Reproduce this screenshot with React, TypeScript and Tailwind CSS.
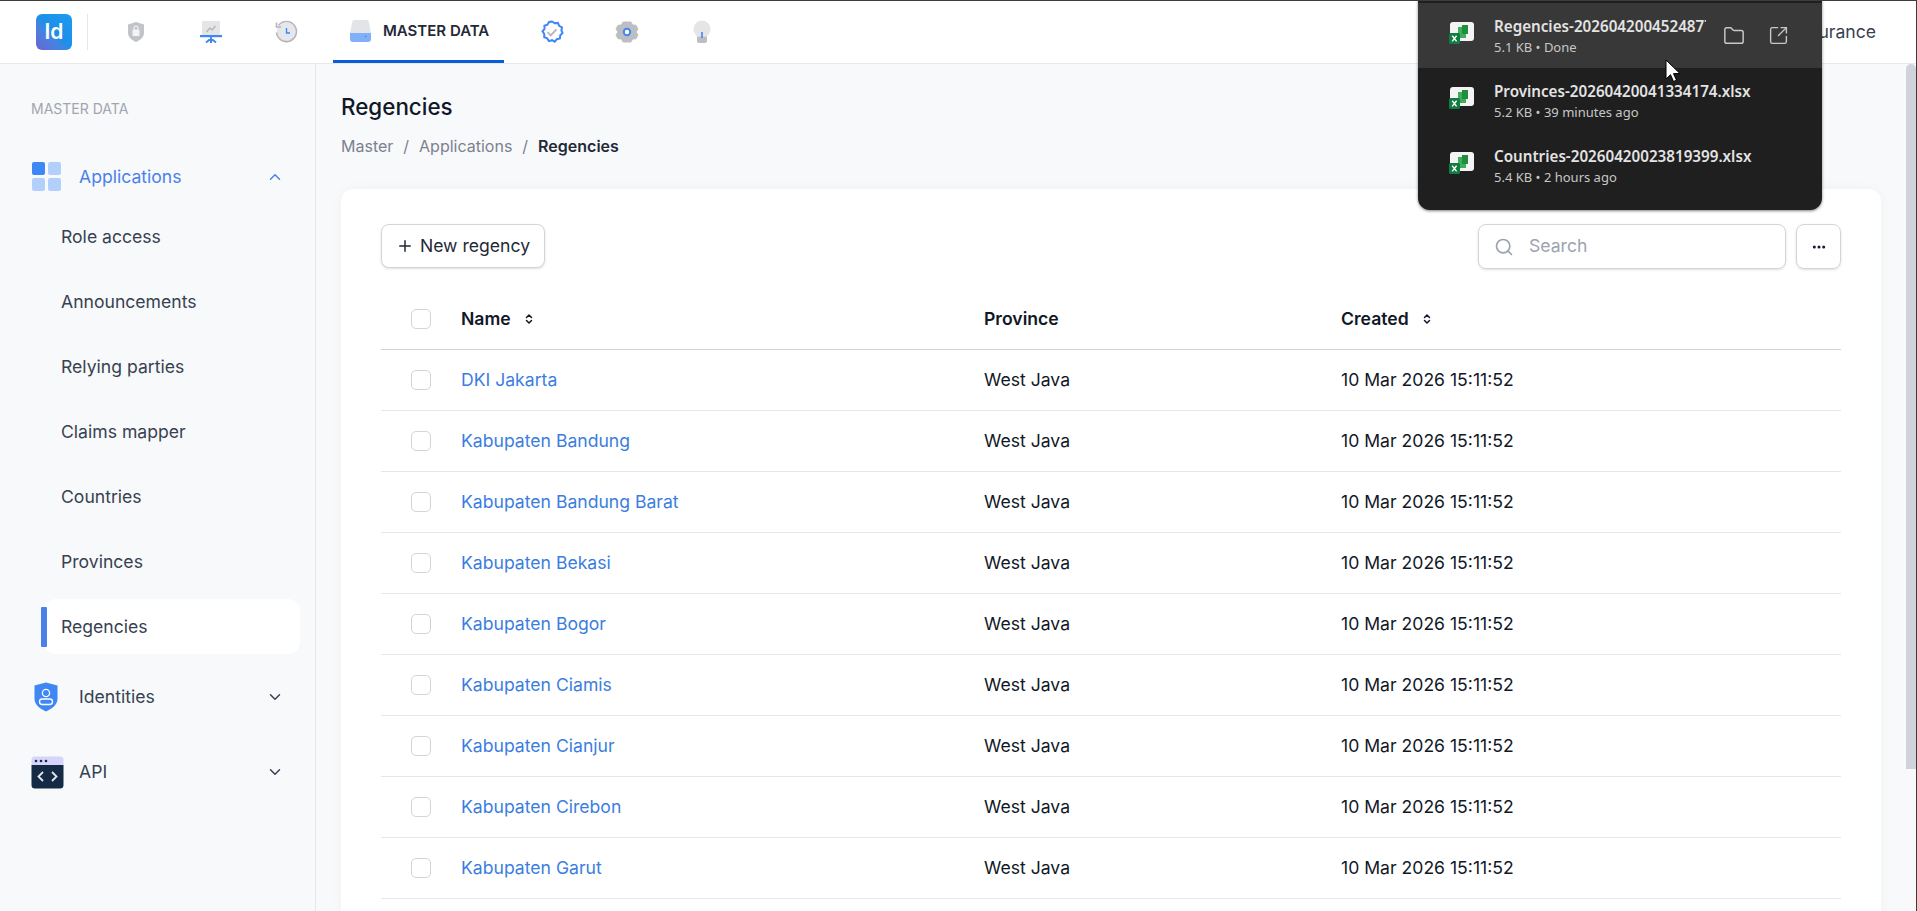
import { ChevronDown, ChevronUp, ChevronsUpDown, Ellipsis, Folder, Plus, Search, SquareArrowOutUpRight } from "lucide-react";

const subMenu = ["Role access", "Announcements", "Relying parties", "Claims mapper", "Countries", "Provinces", "Regencies"];

const regencies = [
  "DKI Jakarta",
  "Kabupaten Bandung",
  "Kabupaten Bandung Barat",
  "Kabupaten Bekasi",
  "Kabupaten Bogor",
  "Kabupaten Ciamis",
  "Kabupaten Cianjur",
  "Kabupaten Cirebon",
  "Kabupaten Garut",
];

const downloads = [
  { name: "Regencies-20260420045248774.xlsx", info: "5.1 KB • Done", active: true },
  { name: "Provinces-20260420041334174.xlsx", info: "5.2 KB • 39 minutes ago", active: false },
  { name: "Countries-20260420023819399.xlsx", info: "5.4 KB • 2 hours ago", active: false },
];

const ShieldIcon = () => (
  <svg width="24" height="24" viewBox="0 0 24 24">
    <path d="M12 2l8 2.6v8c0 4.6-3.4 7.6-8 9.4-4.600-1.800-8-4.800-8-9.400v-8z" fill="#c2c3c9" />
    <rect x="8.500" y="9.500" width="7" height="6.500" rx="1" fill="#f3f4f6" />
    <path d="M10 9.500V8a2 2 0 0 1 4 0v1.500" fill="none" stroke="#f3f4f6" strokeWidth="1.200" />
  </svg>
);

const BoardIcon = () => (
  <svg width="24" height="24" viewBox="0 0 24 24">
    <rect x="3" y="1" width="18" height="15" fill="#e5e5e7" />
    <path d="M7.500 12l3.500-4 2 2 3.500-4" fill="none" stroke="#b5b6bc" strokeWidth="1.500" />
    <rect x="1" y="15" width="22" height="2.200" fill="#3f87f5" />
    <path d="M12 17v6M12 18.500l-5 4M12 18.500l5 4" fill="none" stroke="#3f87f5" strokeWidth="2" />
  </svg>
);

const HistoryIcon = () => (
  <svg width="24" height="24" viewBox="0 0 24 24">
    <circle cx="12.500" cy="12.500" r="10" fill="#e5e7eb" />
    <path d="M4.500 5.500a10 10 0 1 1-2 7" fill="none" stroke="#b5b6bc" strokeWidth="1.600" />
    <path d="M2.500 2.500v4.500H7" fill="none" stroke="#b5b6bc" strokeWidth="1.600" />
    <path d="M12.500 8v5h3.500" fill="none" stroke="#3f87f5" strokeWidth="1.400" />
  </svg>
);

const DriveIcon = () => (
  <svg width="21" height="22" viewBox="0 0 21 22">
    <path d="M5 0h11a3 3 0 0 1 3 3l2 10H0L2 3a3 3 0 0 1 3-3z" fill="#e3e4e8" />
    <path d="M0 13h21v6a3 3 0 0 1-3 3H3a3 3 0 0 1-3-3z" fill="#7fb0f8" />
    <circle cx="15.500" cy="16.500" r="0.800" fill="#3f87f5" />
  </svg>
);

const BadgeIcon = () => (
  <svg width="24" height="24" viewBox="0 0 24 24">
    <path
      d="M12 1.500l2.700 1.700 3.200-.3 1.300 2.900 2.800 1.600-.6 3.100 1.100 2.500-2.200 2.300-.4 3.200-3.100.7-2 2.500-2.800-1.500-3 .9-1.800-2.700-3-1.200.1-3.200-1.800-2.600 2-2.500-.1-3.200 3-1 1.700-2.700z"
      fill="#fff"
      stroke="#3f87f5"
      strokeWidth="2"
    />
    <path d="M7.500 12.200l3.200 3.200 5.800-6" fill="none" stroke="#b5b6bc" strokeWidth="1.800" />
  </svg>
);

const GearIcon = () => (
  <svg width="24" height="24" viewBox="0 0 24 24">
    <path
      d="M8 2h8l1.500 3 3.500.300 2 3.700-2 3 2 3-2 3.700-3.500.300L16 22H8l-1.500-3-3.500-.300L1 15l2-3-2-3 2-3.700 3.500-.300z"
      fill="#bdbec4"
      strokeLinejoin="round"
      stroke="#bdbec4"
    />
    <circle cx="12" cy="12" r="4.200" fill="#3f87f5" />
    <circle cx="12" cy="12" r="2.200" fill="#fff" />
  </svg>
);

const BulbIcon = () => (
  <svg width="24" height="24" viewBox="0 0 24 24">
    <path d="M12 0.500a8.500 8.500 0 0 1 8.500 8.500c0 3.500-2 5.500-3.500 7.500H7C5.500 14.500 3.500 12.500 3.500 9A8.500 8.500 0 0 1 12 0.500z" fill="#e5e5e7" />
    <path d="M7 16.500h10V21a2 2 0 0 1-2 2H9a2 2 0 0 1-2-2z" fill="#bdbec4" />
    <rect x="11.200" y="12" width="1.600" height="6" fill="#3f87f5" />
  </svg>
);

const AppsIcon = () => (
  <svg width="30" height="30" viewBox="0 0 30 30">
    <rect x="1" y="0" width="13" height="13" rx="2" fill="#3f87f5" />
    <rect x="17" y="0" width="13" height="13" rx="2" fill="#b3d0fc" />
    <rect x="1" y="16" width="13" height="13" rx="2" fill="#b3d0fc" />
    <rect x="17" y="16" width="13" height="13" rx="2" fill="#b3d0fc" />
  </svg>
);

const IdentityIcon = () => (
  <svg width="30" height="30" viewBox="0 0 30 30">
    <path d="M15 0.500l11.500 3v13.500c0 5.500-5 9.500-11.500 12.500C8.500 26.500 3.500 22.500 3.500 17V3.500z" fill="#3f87f5" />
    <circle cx="15" cy="11" r="3.600" fill="none" stroke="#fff" strokeWidth="1.300" />
    <rect x="8.500" y="17" width="13" height="5.500" rx="2.700" fill="none" stroke="#fff" strokeWidth="1.300" />
  </svg>
);

const ApiIcon = () => (
  <svg width="33" height="33" viewBox="0 0 33 33">
    <path d="M4 0.500h25a3.500 3.500 0 0 1 3.500 3.500v5H.5V4A3.500 3.500 0 0 1 4 .5z" fill="#d6d4fa" />
    <path d="M.5 9h32v20a3.500 3.500 0 0 1-3.500 3.500H4A3.500 3.500 0 0 1 .5 29z" fill="#142a45" />
    <circle cx="5" cy="5" r="1.300" fill="#142a45" />
    <circle cx="10" cy="5" r="1.300" fill="#142a45" />
    <circle cx="15" cy="5" r="1.300" fill="#142a45" />
    <path d="M12 16l-4.500 4.500L12 25M21 16l4.500 4.500L21 25" fill="none" stroke="#e5e7eb" strokeWidth="1.800" />
  </svg>
);

const ExcelIcon = () => (
  <svg width="26" height="24" viewBox="0 0 26 24" className="-mt-[5px] shrink-0">
    <rect x="1" y="1" width="24" height="19" rx="3" fill="#f4f4f4" />
    <rect x="9" y="6" width="8" height="11" fill="#3fae5a" />
    <rect x="13" y="4" width="6" height="9" fill="#1f8f3f" />
    <rect x="0" y="12" width="11" height="11" rx="1.500" fill="#107c41" />
    <path d="M3.200 14.800l4.400 5.600M7.600 14.800l-4.400 5.600" stroke="#fff" strokeWidth="1.400" />
  </svg>
);

const Checkbox = () => <div className="h-5 w-5 rounded-[5px] border border-[#d1d5db] bg-white" />;

const HeaderIcon = ({ children }: { children: React.ReactNode }) => (
  <div className="flex h-full w-[75px] items-center justify-center">{children}</div>
);

export default function App() {
  return (
    <div className="relative flex h-[911px] w-full flex-col overflow-hidden border-t border-r border-[#3c3c3c] bg-[#f8f9fb] font-['Inter',sans-serif] text-[17.6px]">
      <header className="flex h-[63px] shrink-0 items-center border-b border-[#e9eaee] bg-white pl-[36px]">
        <div className="flex h-9 w-9 items-center justify-center rounded-md bg-gradient-to-tr from-[#6a63cf] via-[#1d8fe8] to-[#1d9bf0] text-[21px] font-semibold text-white">
          Id
        </div>
        <div className="ml-[15px] mr-[10px] h-9 w-px bg-[#e5e7eb]" />
        <HeaderIcon><ShieldIcon /></HeaderIcon>
        <HeaderIcon><BoardIcon /></HeaderIcon>
        <HeaderIcon><HistoryIcon /></HeaderIcon>
        <div className="mx-[10px] flex h-full w-[171px] items-center gap-[12px] border-b-[3px] border-[#0b5ed7] pl-[17px]">
          <DriveIcon />
          <span className="mt-[1px] text-[15px] font-semibold text-[#1f2937]">MASTER DATA</span>
        </div>
        <HeaderIcon><BadgeIcon /></HeaderIcon>
        <HeaderIcon><GearIcon /></HeaderIcon>
        <HeaderIcon><BulbIcon /></HeaderIcon>
        <span className="ml-auto mr-[40px] text-[#374151]">Identity Assurance</span>
      </header>

      <div className="flex min-h-0 flex-1">
        <aside className="flex w-[316px] shrink-0 flex-col border-r border-[#e5e7eb] pl-[31px] pr-[15px]">
          <div className="mt-[35px] text-[14px] leading-5 text-[#a1a5ae]">MASTER DATA</div>
          <div className="mt-[41px] flex h-[34px] items-center text-[#4b80ea]">
            <AppsIcon />
            <span className="ml-[18px]">Applications</span>
            <ChevronUp className="ml-auto mr-[16px]" size={18} />
          </div>
          <ul className="mt-[11px] flex flex-col">
            {subMenu.map((item) => (
              <li key={item} className="relative -ml-[18px] flex h-[65px] items-center pl-[48px] text-[#374151]">
                {item === "Regencies" && (
                  <>
                    <div className="absolute left-[31px] right-0 top-[4px] h-[55px] rounded-xl bg-white" />
                    <div className="absolute left-[28px] top-[12px] h-10 w-[6px] rounded-[1px] bg-[#4b80ea]" />
                  </>
                )}
                <span className="relative">{item}</span>
              </li>
            ))}
          </ul>
          <div className="mt-[20px] flex h-[34px] items-center text-[#374151]">
            <IdentityIcon />
            <span className="ml-[18px]">Identities</span>
            <ChevronDown className="ml-auto mr-[16px]" size={18} />
          </div>
          <div className="mt-[41px] flex h-[34px] items-center text-[#374151]">
            <ApiIcon />
            <span className="ml-[15px]">API</span>
            <ChevronDown className="ml-auto mr-[16px]" size={18} />
          </div>
        </aside>

        <main className="flex min-w-0 flex-1 flex-col pl-[25px] pr-[25px]">
          <h1 className="mt-[27px] text-[22.400px] font-medium leading-8 text-[#111827]">Regencies</h1>
          <nav className="mt-[11px] flex h-6 items-center gap-[10px] text-[16px] text-[#7b8190]">
            <span>Master</span>
            <span>/</span>
            <span>Applications</span>
            <span>/</span>
            <span className="font-semibold text-[#1f2937]">Regencies</span>
          </nav>
          <section className="mt-[31px] flex-1 rounded-t-xl bg-white px-[40px] pt-[35px] shadow-[0_0_12px_rgba(17,24,39,0.04)]">
            <div className="flex h-[45px] items-start justify-between">
              <button className="flex h-[44px] w-[164px] items-center justify-center gap-[6px] rounded-lg border border-[#d1d5db] bg-white text-[#1f2937] shadow-sm">
                <Plus size={18} />
                New regency
              </button>
              <div className="flex items-center gap-[10px]">
                <div className="flex h-[45px] w-[308px] items-center gap-[15px] rounded-lg border border-[#d1d5db] px-[15px] text-[#9ca3af] shadow-sm">
                  <Search size={20} />
                  <span>Search</span>
                </div>
                <button className="flex h-[45px] w-[45px] items-center justify-center rounded-lg border border-[#d1d5db] text-[#111827] shadow-sm">
                  <Ellipsis size={16} strokeWidth={2.5} />
                </button>
              </div>
            </div>

            <div className="mt-[20px] grid h-[61px] grid-cols-[80px_523px_357px_1fr] items-center border-b border-[#d1d5db] font-semibold text-[#111827]">
              <div className="pl-[30px]"><Checkbox /></div>
              <div className="flex items-center gap-[12px]">
                Name
                <ChevronsUpDown size={12} strokeWidth={3} />
              </div>
              <div>Province</div>
              <div className="flex items-center gap-[12px]">
                Created
                <ChevronsUpDown size={12} strokeWidth={3} />
              </div>
            </div>
            {regencies.map((name) => (
              <div key={name} className="grid h-[61px] grid-cols-[80px_523px_357px_1fr] items-center border-b border-[#e5e7eb] text-[#111827]">
                <div className="pl-[30px]"><Checkbox /></div>
                <div className="text-[#3b7de0]">{name}</div>
                <div>West Java</div>
                <div>10 Mar 2026 15:11:52</div>
              </div>
            ))}
          </section>
        </main>

        <div className="w-[10px] shrink-0">
          <div className="h-[705px] rounded-t-md bg-[#d1d3da]" />
        </div>
      </div>

      {/* browser download bubble over the page */}
      <div className="absolute -top-px left-[1418px] h-[210px] w-[404px] rounded-b-xl bg-[#1f1f1f] pt-[3px] font-['Noto_Sans',sans-serif] shadow-[0_1px_3px_rgba(0,0,0,0.5)]">
        {downloads.map((d) => (
          <div key={d.name} className={`flex h-[65px] items-center pl-[31px] ${d.active ? "bg-[#383838]" : ""}`}>
            <ExcelIcon />
            <div className={`ml-[19px] overflow-hidden whitespace-nowrap pt-[2px] ${d.active ? "w-[212px]" : "w-[300px]"}`}>
              <div className="text-[15.200px] font-semibold leading-5 text-[#e3e3e3]">{d.name}</div>
              <div className="mt-[1px] text-[13px] leading-5 text-[#c7c7c7]">{d.info}</div>
            </div>
            {d.active && (
              <div className="ml-[17px] flex items-center gap-[23px] text-[#c7c7c7]">
                <Folder size={22} strokeWidth={1.6} />
                <SquareArrowOutUpRight size={21} strokeWidth={1.6} />
              </div>
            )}
          </div>
        ))}
      </div>

      {/* mouse pointer */}
      <svg className="absolute left-[1665px] top-[58px]" width="16" height="24" viewBox="0 0 16 24">
        <path d="M1 1v19l4.500-4.300 3 6.800 3-1.300-3-6.600H15z" fill="#fff" stroke="#000" strokeWidth="1" />
      </svg>
    </div>
  );
}
